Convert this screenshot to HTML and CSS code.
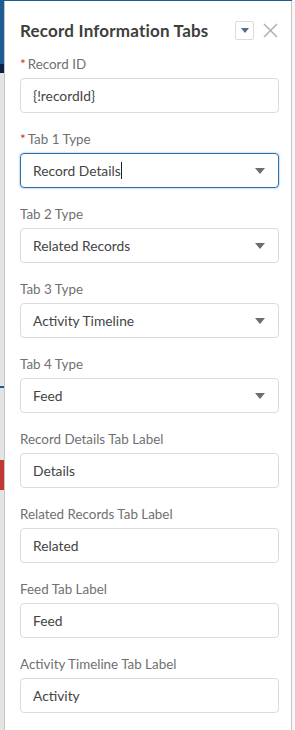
FILE: index.html
```html
<!DOCTYPE html>
<html lang="en">

<head>
    <meta charset="UTF-8">
    <meta name="viewport" content="width=device-width, initial-scale=1.0">
    <title>Record Information Tabs</title>
    <link rel="stylesheet" href="styles.css">
</head>

<body>
    <div class="page">
        <div class="backdrop">
            <div class="bd-blue"></div>
            <div class="bd-navy"></div>
            <div class="bd-gray"></div>
            <div class="bd-line"></div>
            <div class="bd-gray2"></div>
            <div class="bd-red"></div>
            <div class="bd-gray3"></div>
        </div>
        <div class="main">
            <div class="topbar"></div>
            <div class="panel">
                <div class="header">
                    <h2 class="title">Record Information Tabs</h2>
                    <div class="tools">
                        <span class="menu-btn"><span class="tri small"></span></span>
                        <span class="close">
                            <svg width="15" height="15" viewBox="0 0 15 15">
                                <path d="M1 1 L14 14 M14 1 L1 14" stroke="#b4b2b0" stroke-width="1.6" fill="none" />
                            </svg>
                        </span>
                    </div>
                </div>

                <div class="field">
                    <label><span class="req">*</span>Record ID</label>
                    <div class="input">{!recordId}</div>
                </div>
                <div class="field">
                    <label><span class="req">*</span>Tab 1 Type</label>
                    <div class="input select focused">Record Details<span class="caret"></span><span class="tri"></span></div>
                </div>
                <div class="field">
                    <label>Tab 2 Type</label>
                    <div class="input select">Related Records<span class="tri"></span></div>
                </div>
                <div class="field">
                    <label>Tab 3 Type</label>
                    <div class="input select">Activity Timeline<span class="tri"></span></div>
                </div>
                <div class="field">
                    <label>Tab 4 Type</label>
                    <div class="input select">Feed<span class="tri"></span></div>
                </div>
                <div class="field">
                    <label>Record Details Tab Label</label>
                    <div class="input">Details</div>
                </div>
                <div class="field">
                    <label>Related Records Tab Label</label>
                    <div class="input">Related</div>
                </div>
                <div class="field">
                    <label>Feed Tab Label</label>
                    <div class="input">Feed</div>
                </div>
                <div class="field">
                    <label>Activity Timeline Tab Label</label>
                    <div class="input">Activity</div>
                </div>
            </div>
        </div>
        <div class="edge"></div>
    </div>
</body>

</html>
```

FILE: styles.css
```css
* {
    padding: 0;
    margin: 0;
    box-sizing: border-box;
}

body {
    background: #f4f4f4;
    font-family: Lato, "Open Sans", sans-serif;
    height: 730px;
    overflow: hidden;
}

.page {
    display: flex;
    height: 730px;
}

.backdrop {
    width: 4px;
    display: flex;
    flex-direction: column;
}

.bd-blue {
    height: 64px;
    background: #1d5b93;
}

.bd-navy {
    height: 9px;
    background: #0b1f47;
}

.bd-gray {
    height: 313px;
    background: #e4e4e4;
}

.bd-line {
    height: 2px;
    background: #1d5b93;
}

.bd-gray2 {
    height: 72px;
    background: #e4e4e4;
}

.bd-red {
    height: 30px;
    background: #c23934;
}

.bd-gray3 {
    flex: 1;
    background: #e4e4e4;
}

.main {
    flex: 1;
    display: flex;
    flex-direction: column;
}

.topbar {
    height: 4px;
    background: #1d5b93;
}

.edge {
    width: 3px;
    background: #f7f7f7;
}

.panel {
    flex: 1;
    background: #fff;
    border-left: 1px solid #c9c7c5;
    border-right: 1px solid #c9c7c5;
    padding: 15px 12px 0 15px;
}

.header {
    display: flex;
    align-items: center;
    justify-content: space-between;
    height: 28px;
    margin-bottom: 11px;
}

.title {
    font-size: 17px;
    font-weight: 700;
    letter-spacing: 0.2px;
    color: #3e3e3c;
}

.tools {
    display: flex;
    align-items: center;
    gap: 9px;
}

.menu-btn {
    width: 19px;
    height: 19px;
    border: 1px solid #dddbda;
    border-radius: 2px;
    display: flex;
    align-items: center;
    justify-content: center;
}

.close {
    display: flex;
    margin-right: 1px;
}

.field {
    margin-bottom: 17px;
}

.field label {
    display: block;
    font-size: 13.4px;
    line-height: 18px;
    color: #707070;
    margin-bottom: 5px;
}

.req {
    color: #c23934;
    margin-right: 2px;
}

.input {
    position: relative;
    height: 35px;
    border: 1px solid #dddbda;
    border-radius: 4px;
    padding: 0 12px;
    display: flex;
    align-items: center;
    font-size: 13.8px;
    color: #444;
}

.input.focused {
    border-color: #2f6fa8;
    box-shadow: 0 0 2px #5b9bd5;
}

.caret {
    width: 1px;
    height: 17px;
    background: #222;
}

.tri {
    width: 0;
    height: 0;
    border-left: 5px solid transparent;
    border-right: 5px solid transparent;
    border-top: 6px solid #6b6d70;
}

.input .tri {
    margin-left: auto;
    margin-right: 1px;
}

.tri.small {
    border-left-width: 4px;
    border-right-width: 4px;
    border-top: 5px solid #54698d;
}
```
